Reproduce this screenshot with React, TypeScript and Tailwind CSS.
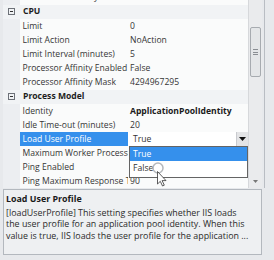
import React from "react";

type R = { label: string; value?: string; cat?: boolean; bold?: boolean; sel?: boolean };

const rows: R[] = [
  { label: "Start Automatically", value: "False" },
  { label: "CPU", cat: true },
  { label: "Limit", value: "0" },
  { label: "Limit Action", value: "NoAction" },
  { label: "Limit Interval (minutes)", value: "5" },
  { label: "Processor Affinity Enabled", value: "False" },
  { label: "Processor Affinity Mask", value: "4294967295" },
  { label: "Process Model", cat: true },
  { label: "Identity", value: "ApplicationPoolIdentity", bold: true },
  { label: "Idle Time-out (minutes)", value: "20" },
  { label: "Load User Profile", value: "True", sel: true },
  { label: "Maximum Worker Processes", value: "1" },
  { label: "Ping Enabled", value: "True" },
  { label: "Ping Maximum Response Time (seconds)", value: "90" },
];

function Row({ r, first }: { r: R; first?: boolean }) {
  if (r.cat) {
    return (
      <div className="flex h-[14.17px] shrink-0 items-center bg-[#f1f3f5]">
        <div className="w-[17px] h-full flex items-center justify-center">
          <div className="w-[7px] h-[7px] border border-[#6d7178] flex items-center justify-center">
            <div className="w-[3px] h-px bg-[#333]" />
          </div>
        </div>
        <div className="pl-[3px] font-bold text-[#1e1e1e] whitespace-nowrap">{r.label}</div>
      </div>
    );
  }
  return (
    <div className={`flex h-[14.17px] shrink-0 items-center ${first ? "-mt-[9.5px]" : ""}`}>
      <div className="w-[17px] h-full bg-[#eceef1]" />
      <div
        className={
          r.sel
            ? "w-[108px] h-full flex items-center pl-[2.5px] overflow-hidden whitespace-nowrap bg-[#3590ec] text-white"
            : "w-[108px] h-full flex items-center pl-[2.5px] overflow-hidden whitespace-nowrap bg-[#fafbfb] text-[#353535]"
        }
      >
        {r.label}
      </div>
      {r.sel ? (
        <div className="flex-1 h-full flex items-center bg-white">
          <div className="flex-1 pl-[5px] text-[#333]">{r.value}</div>
          <div className="w-[12px] h-full bg-[#e3e4e6] border-l border-[#c9cbcf] flex items-center justify-center">
            <svg width="7" height="4" viewBox="0 0 7 4">
              <path d="M0 0H7L3.5 4Z" fill="#111" />
            </svg>
          </div>
        </div>
      ) : (
        <div
          className={
            r.bold
              ? "flex-1 h-full flex items-center pl-[2px] bg-[#fafbfb] whitespace-nowrap overflow-hidden font-bold text-[#1a1a1a]"
              : "flex-1 h-full flex items-center pl-[2px] bg-[#fafbfb] whitespace-nowrap overflow-hidden text-[#353535]"
          }
        >
          {r.value}
        </div>
      )}
    </div>
  );
}

export default function App() {
  return (
    <div className="relative w-[274px] h-[260px] overflow-hidden bg-[#e7e9ec] font-['Open_Sans',sans-serif] text-[8.6px] leading-none">
      <div className="flex h-[188px] ml-[3px] w-[262px] border-r border-[#b9bdc3]">
        <div className="w-[245px] h-full overflow-hidden flex flex-col bg-[#fafbfb]">
          {rows.map((r, i) => (
            <Row key={i} r={r} first={i === 0} />
          ))}
        </div>
        <div className="w-[14px] h-full bg-[#eaebed] border-l border-[#d6d8db] flex flex-col">
          <div className="h-[27px]" />
          <div className="h-[50px] mx-[1px] rounded-[2px] border border-[#a7abb0] bg-[#e4e6e8] flex flex-col items-center justify-center gap-[1.5px]">
            <div className="w-[5px] h-px bg-[#8a8e93]" />
            <div className="w-[5px] h-px bg-[#8a8e93]" />
            <div className="w-[5px] h-px bg-[#8a8e93]" />
          </div>
          <div className="flex-1" />
          <div className="h-[14px] flex items-center justify-center">
            <svg width="5" height="3" viewBox="0 0 5 3">
              <path d="M0 0H5L2.5 3Z" fill="#777" />
            </svg>
          </div>
        </div>
      </div>
      <div className="ml-[3px] mt-px w-[259px] h-[66px] border border-[#b3b8be] bg-[#eef0f2] px-[2px] pt-[5px] text-[#2b2b2b] text-[8.9px]">
        <div className="font-bold text-[#1a1a1a]">Load User Profile</div>
        <div className="mt-[3px] leading-[11.5px] whitespace-nowrap">
          <div>[loadUserProfile] This setting specifies whether IIS loads</div>
          <div>the user profile for an application pool identity. When this</div>
          <div>value is true, IIS loads the user profile for the application ...</div>
        </div>
      </div>
      <div className="absolute left-[129px] top-[146px] w-[119px] h-[32px] border border-[#646464] bg-white flex flex-col">
        <div className="h-[14px] bg-[#3590ec] text-white flex items-center pl-[3px]">True</div>
        <div className="h-[14px] text-[#333] flex items-center pl-[3px]">False</div>
      </div>
      <svg className="absolute left-[150px] top-[162px]" width="20" height="26" viewBox="0 0 20 26">
        <circle cx="8" cy="6" r="5" fill="none" stroke="#b5b8bc" strokeWidth="1.5" />
        <path d="M7.5 9.5V22L10.3 19.3L12.5 24L14.3 23.2L12.1 18.6H16Z" fill="#fff" stroke="#333" strokeWidth="0.8" strokeLinejoin="round" />
      </svg>
    </div>
  );
}
